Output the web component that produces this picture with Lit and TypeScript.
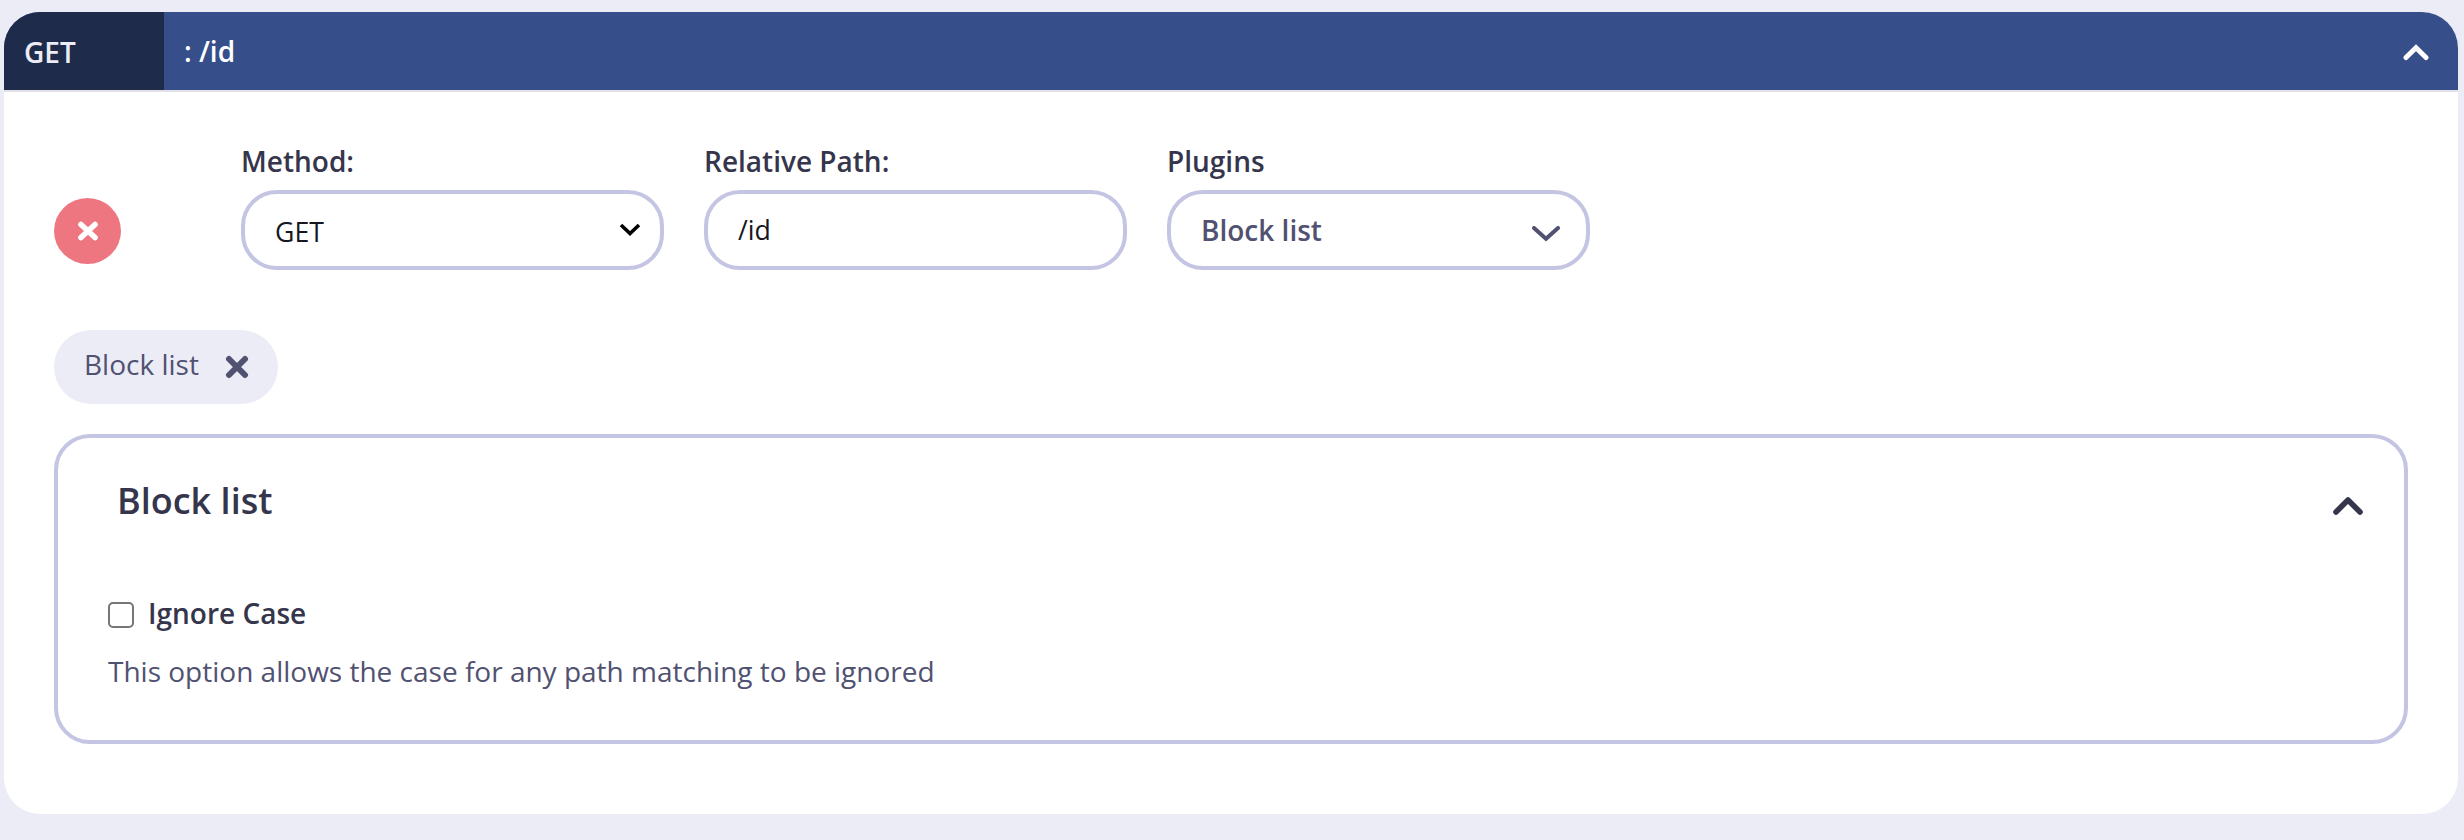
import { LitElement, html, css } from "lit";
import { customElement, property } from "lit/decorators.js";

@customElement("stroke-icon")
class StrokeIcon extends LitElement {
  @property() d = "";
  @property({ type: Number }) w = 24;
  @property({ type: Number }) h = 16;
  @property({ type: Number }) weight = 5;
  @property() cap = "round";
  @property() join = "round";

  static styles = css`
    :host { display: block; flex: none; line-height: 0; }
    .glyph { display: block; fill: none; stroke: currentColor; }
  `;

  render() {
    return html`<svg class="glyph" width=${this.w} height=${this.h} viewBox="0 0 ${this.w} ${this.h}"
      stroke-width=${this.weight} stroke-linecap=${this.cap} stroke-linejoin=${this.join}>
      <path d=${this.d}></path>
    </svg>`;
  }
}

@customElement("form-field")
class FormField extends LitElement {
  @property() label = "";

  static styles = css`
    :host { display: flex; flex-direction: column; gap: 10px; width: 423px; }
    .label { font-weight: 600; color: #35354c; white-space: nowrap; }
    .box {
      box-sizing: border-box; height: 80px; padding: 0 24px 0 30px;
      display: flex; align-items: center; justify-content: space-between;
      border: 4px solid #c4c4e3; border-radius: 36px; background: #fff;
    }
  `;

  render() {
    return html`<div class="label">${this.label}</div><div class="box"><slot></slot><slot name="icon"></slot></div>`;
  }
}

@customElement("app-root")
class AppRoot extends LitElement {
  static styles = css`
    :host {
      display: block; box-sizing: border-box; height: 840px; padding: 12px 6px 26px 4px;
      background: #ececf7; color: #515171;
      font: 400 28px/38px "Open Sans", "Noto Sans", sans-serif;
    }
    .card { height: 802px; border-radius: 36px; overflow: hidden; background: #fff; }
    .header {
      display: flex; height: 78px; background: #364f8b; color: #fff;
      border-bottom: 2px solid #e3e0e8; align-items: center; font-weight: 600;
    }
    .method {
      box-sizing: border-box; width: 160px; height: 78px; padding: 21px 0 0 20px;
      background: #1f2b4a; color: #ececf7; font-weight: 600;
    }
    .path { flex: 1; padding-left: 20px; }
    .header-icon { margin: 2px 28px 0 0; }
    .body { padding: 50px 50px 0; }
    .row { display: flex; align-items: flex-end; gap: 40px; }
    .remove {
      width: 67px; height: 66px; margin: 0 80px 6px 0; border-radius: 50%;
      display: flex; align-items: center; justify-content: center;
      background: #ee7680; color: #fff;
    }
    .value { font-size: 26.67px; line-height: 36px; color: #16181f; }
    .select-value { padding-top: 3px; }
    .plugin-value { font-weight: 600; }
    .black { color: #000; margin-right: -5px; }
    .plugin-icon { margin: 7px 2px 0 0; }
    .chip {
      box-sizing: border-box; width: 224px; height: 74px; margin-top: 60px; padding: 0 29px 0 30px;
      display: flex; align-items: center; justify-content: space-between;
      border-radius: 37px; background: #ececf7;
    }
    .chip-label { padding-bottom: 6px; white-space: nowrap; }
    .panel {
      box-sizing: border-box; height: 310px; margin-top: 30px; padding: 38px 38px 0 50px;
      border: 4px solid #c4c4e3; border-radius: 36px;
    }
    .panel-head { display: flex; justify-content: space-between; padding-left: 9px; color: #35354c; }
    .title { font-size: 36px; line-height: 49px; font-weight: 600; }
    .panel-icon { margin: 20px 2px 0 0; }
    .option { display: flex; align-items: center; margin-top: 69px; gap: 14px; color: #35354c; font-weight: 600; }
    .check {
      appearance: none; box-sizing: border-box; width: 26px; height: 26px; margin: 4px 0 0;
      border: 2px solid #767676; border-radius: 5px; background: #fff;
    }
    .hint { margin-top: 20px; }
  `;

  render() {
    return html`
      <section class="card">
        <header class="header">
          <div class="method">GET</div>
          <div class="path">: /id</div>
          <stroke-icon class="header-icon" w="28" h="18" weight="5" join="miter" d="M4 14.5 L14 4.8 L24 14.5"></stroke-icon>
        </header>
        <div class="body">
          <div class="row">
            <div class="remove">
              <stroke-icon w="22" h="22" weight="5.6" d="M4 4.5 L18 17.5 M18 4.5 L4 17.5"></stroke-icon>
            </div>
            <form-field label="Method:">
              <span class="value select-value">GET</span>
              <stroke-icon slot="icon" class="black" w="22" h="14" weight="3.6" cap="butt" join="miter" d="M2 2 L11 10.5 L20 2"></stroke-icon>
            </form-field>
            <form-field label="Relative Path:">
              <span class="value">/id</span>
            </form-field>
            <form-field label="Plugins">
              <span class="plugin-value">Block list</span>
              <stroke-icon slot="icon" class="plugin-icon" w="28" h="16" weight="4" join="miter" d="M2 2 L14 12.8 L26 2"></stroke-icon>
            </form-field>
          </div>
          <div class="chip">
            <span class="chip-label">Block list</span>
            <stroke-icon w="24" h="24" weight="6" d="M4 4 L20 20 M20 4 L4 20"></stroke-icon>
          </div>
          <section class="panel">
            <div class="panel-head">
              <div class="title">Block list</div>
              <stroke-icon class="panel-icon" w="32" h="20" weight="5.6" d="M4 16 L16 4 L28 16"></stroke-icon>
            </div>
            <label class="option"><input class="check" type="checkbox" />Ignore Case</label>
            <div class="hint">This option allows the case for any path matching to be ignored</div>
          </section>
        </div>
      </section>
    `;
  }
}
